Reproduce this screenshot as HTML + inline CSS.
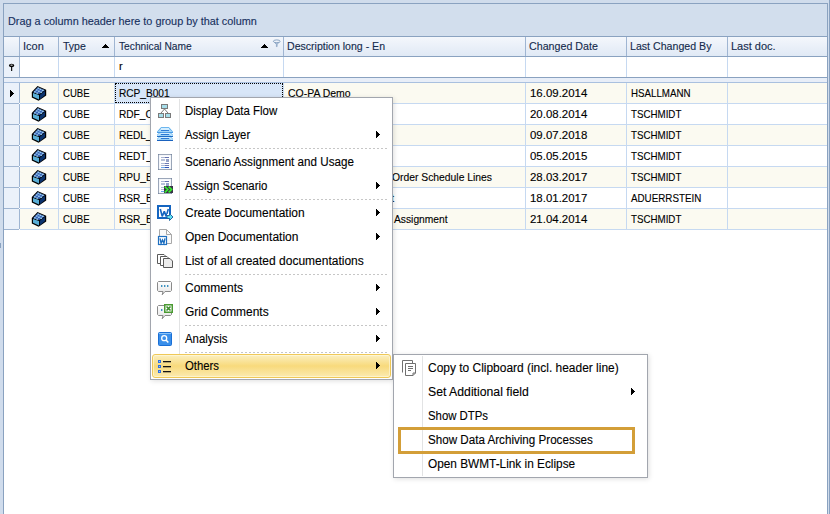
<!DOCTYPE html>
<html><head><meta charset="utf-8">
<style>
*{margin:0;padding:0;box-sizing:border-box}
html,body{width:830px;height:514px;overflow:hidden;background:#d0dcec;font-family:"Liberation Sans",sans-serif}
body{position:relative}
.a{position:absolute}
.t{position:absolute;font-size:11px;line-height:21px;height:21px;white-space:nowrap;color:#000;-webkit-text-stroke:0.12px currentColor}
.mi{position:absolute;font-size:12px;line-height:24px;height:24px;white-space:nowrap;color:#000;-webkit-text-stroke:0.12px currentColor}
.sep{position:absolute;height:1px;background-image:linear-gradient(to right,#c6c6c6 50%,transparent 50%);background-size:4px 1px}
.arr{position:absolute;width:0;height:0;border-top:4px solid transparent;border-bottom:3px solid transparent;border-left:4px solid #000}
svg{position:absolute;overflow:visible}
</style></head><body>

<div class="a" style="left:829px;top:0px;width:1px;height:514px;background:#8aa2c0;"></div>
<div class="a" style="left:0px;top:243px;width:1px;height:5px;background:#8aa2c0;"></div>
<div class="a" style="left:3px;top:3px;width:825px;height:511px;background:#8aa2c0;"></div>
<div class="a" style="left:4px;top:4px;width:823px;height:510px;background:#ffffff;"></div>
<div class="a" style="left:4px;top:4px;width:823px;height:32px;background:#d2deed;"></div>
<div class="t" style="left:8px;top:11px;color:#17305e;transform:scaleX(0.988);transform-origin:0 0;">Drag a column header here to group by that column</div>
<div class="a" style="left:4px;top:36px;width:823px;height:1px;background:#8aa2c0;"></div>
<div class="a" style="left:4px;top:37px;width:823px;height:19px;background:linear-gradient(#f4f7fc,#e0e9f5);"></div>
<div class="a" style="left:4px;top:56px;width:823px;height:1px;background:#8aa2c0;"></div>
<div class="a" style="left:19px;top:37px;width:1px;height:19px;background:#9fb5d2;"></div>
<div class="a" style="left:58px;top:37px;width:1px;height:19px;background:#9fb5d2;"></div>
<div class="a" style="left:114px;top:37px;width:1px;height:19px;background:#9fb5d2;"></div>
<div class="a" style="left:283px;top:37px;width:1px;height:19px;background:#9fb5d2;"></div>
<div class="a" style="left:525px;top:37px;width:1px;height:19px;background:#9fb5d2;"></div>
<div class="a" style="left:626px;top:37px;width:1px;height:19px;background:#9fb5d2;"></div>
<div class="a" style="left:727px;top:37px;width:1px;height:19px;background:#9fb5d2;"></div>
<div class="t" style="left:23px;top:36px;color:#142a4c;">Icon</div>
<div class="t" style="left:63px;top:36px;color:#142a4c;transform:scaleX(0.958);transform-origin:0 0;">Type</div>
<div class="t" style="left:118.5px;top:36px;color:#142a4c;transform:scaleX(0.929);transform-origin:0 0;">Technical Name</div>
<div class="t" style="left:287px;top:36px;color:#142a4c;transform:scaleX(0.96);transform-origin:0 0;">Description long - En</div>
<div class="t" style="left:529px;top:36px;color:#142a4c;transform:scaleX(0.971);transform-origin:0 0;">Changed Date</div>
<div class="t" style="left:629.5px;top:36px;color:#142a4c;transform:scaleX(0.965);transform-origin:0 0;">Last Changed By</div>
<div class="t" style="left:731px;top:36px;color:#142a4c;">Last doc.</div>
<svg style="left:102px;top:44px" width="7" height="4" shape-rendering="crispEdges"><path d="M3,0h1v1h-1z M2,1h3v1h-3z M1,2h5v1h-5z M0,3h7v1h-7z" fill="#000"/></svg>
<svg style="left:261px;top:44px" width="7" height="4" shape-rendering="crispEdges"><path d="M3,0h1v1h-1z M2,1h3v1h-3z M1,2h5v1h-5z M0,3h7v1h-7z" fill="#000"/></svg>
<svg style="left:272px;top:39px" width="10" height="10"><path d="M1.5,2.5 L4.4,5.3 V7.6 H5.1 V5.3 L8,2.5 Z" fill="#a9bdd7" stroke="#8ca6c4" stroke-width="0.8"/><ellipse cx="4.75" cy="2.3" rx="3.4" ry="1.4" fill="#eef3fa" stroke="#8ca6c4" stroke-width="1"/></svg>
<div class="a" style="left:4px;top:57px;width:15px;height:20px;background:#ebf1fa;"></div>
<div class="a" style="left:19px;top:57px;width:1px;height:20px;background:#9fb5d2;"></div>
<div class="a" style="left:58px;top:57px;width:1px;height:20px;background:#c6d9f1;"></div>
<div class="a" style="left:114px;top:57px;width:1px;height:20px;background:#c6d9f1;"></div>
<div class="a" style="left:283px;top:57px;width:1px;height:20px;background:#c6d9f1;"></div>
<div class="a" style="left:525px;top:57px;width:1px;height:20px;background:#c6d9f1;"></div>
<div class="a" style="left:626px;top:57px;width:1px;height:20px;background:#c6d9f1;"></div>
<div class="a" style="left:727px;top:57px;width:1px;height:20px;background:#c6d9f1;"></div>
<div class="a" style="left:4px;top:77px;width:823px;height:1px;background:#8aa2c0;"></div>
<div class="t" style="left:119px;top:56px;color:#000;">r</div>
<svg style="left:8px;top:63px" width="8" height="9"><ellipse cx="3.6" cy="2.5" rx="2.7" ry="1.8" fill="#000"/><ellipse cx="3.6" cy="2.1" rx="1.4" ry="0.6" fill="#d8d8d8"/><rect x="3.1" y="4" width="1.1" height="4" fill="#000"/></svg>
<div class="a" style="left:4px;top:78px;width:823px;height:4px;background:#e8eef8;"></div>
<div class="a" style="left:4px;top:82px;width:823px;height:1px;background:#a9c0df;"></div>
<div class="a" style="left:4px;top:83px;width:15px;height:20px;background:#ebf1fa;"></div>
<div class="a" style="left:19px;top:83px;width:1px;height:20px;background:#9fb5d2;"></div>
<div class="a" style="left:20px;top:83px;width:807px;height:20px;background:#fbfaf1;"></div>
<div class="a" style="left:58px;top:83px;width:1px;height:20px;background:#c6d9f1;"></div>
<div class="a" style="left:114px;top:83px;width:1px;height:20px;background:#c6d9f1;"></div>
<div class="a" style="left:283px;top:83px;width:1px;height:20px;background:#c6d9f1;"></div>
<div class="a" style="left:525px;top:83px;width:1px;height:20px;background:#c6d9f1;"></div>
<div class="a" style="left:626px;top:83px;width:1px;height:20px;background:#c6d9f1;"></div>
<div class="a" style="left:727px;top:83px;width:1px;height:20px;background:#c6d9f1;"></div>
<div class="a" style="left:4px;top:103px;width:15px;height:1px;background:#9fb5d2;"></div>
<div class="a" style="left:20px;top:103px;width:807px;height:1px;background:#c6d9f1;"></div>
<svg style="left:31px;top:85px" width="16" height="17"><g transform="translate(0,0.7)"><polygon points="6.5,0.3 15.2,4 15.2,9.8 7.6,15 0.8,11.8 0.8,6.2" fill="#000"/>
<polygon points="6.7,1.5 13.9,4.5 8.4,8.4 2,6.5" fill="#3761b5"/>
<polygon points="2,7.2 8,9.2 8,13.7 2,11" fill="#58aed6"/>
<polygon points="8.9,9.1 14,5.3 14,9.3 8.9,13.6" fill="#0b336e"/>
<rect x="6.50" y="1.90" width="1.8" height="1.2" fill="#a8dcf7"/><rect x="8.60" y="3.00" width="1.8" height="1.2" fill="#a8dcf7"/><rect x="10.90" y="4.00" width="1.8" height="1.2" fill="#a8dcf7"/><rect x="4.80" y="3.70" width="1.8" height="1.2" fill="#a8dcf7"/><rect x="7.00" y="4.90" width="1.8" height="1.2" fill="#a8dcf7"/><rect x="9.30" y="5.90" width="1.8" height="1.2" fill="#a8dcf7"/><rect x="3.00" y="5.60" width="1.8" height="1.2" fill="#a8dcf7"/><rect x="5.30" y="6.80" width="1.8" height="1.2" fill="#a8dcf7"/></g></svg>
<div class="t" style="left:63px;top:83px;color:#000;transform:scaleX(0.872);transform-origin:0 0;">CUBE</div>
<div class="a" style="left:115px;top:83px;width:168px;height:20px;background:#d8e6f8;"></div>
<div class="a" style="left:115px;top:83px;width:168px;height:20px;border:1px dotted #000"></div>
<div class="t" style="left:119px;top:83px;color:#000;transform:scaleX(0.92);transform-origin:0 0;">RCP_B001</div>
<div class="t" style="left:288px;top:83px;color:#000;transform:scaleX(0.951);transform-origin:0 0;">CO-PA Demo</div>
<div class="t" style="left:530px;top:83px;color:#000;transform:scaleX(1.04);transform-origin:0 0;">16.09.2014</div>
<div class="t" style="left:631px;top:83px;color:#000;transform:scaleX(0.885);transform-origin:0 0;">HSALLMANN</div>
<div class="a" style="left:4px;top:104px;width:15px;height:20px;background:#ebf1fa;"></div>
<div class="a" style="left:19px;top:104px;width:1px;height:20px;background:#9fb5d2;"></div>
<div class="a" style="left:20px;top:104px;width:807px;height:20px;background:#ffffff;"></div>
<div class="a" style="left:58px;top:104px;width:1px;height:20px;background:#c6d9f1;"></div>
<div class="a" style="left:114px;top:104px;width:1px;height:20px;background:#c6d9f1;"></div>
<div class="a" style="left:283px;top:104px;width:1px;height:20px;background:#c6d9f1;"></div>
<div class="a" style="left:525px;top:104px;width:1px;height:20px;background:#c6d9f1;"></div>
<div class="a" style="left:626px;top:104px;width:1px;height:20px;background:#c6d9f1;"></div>
<div class="a" style="left:727px;top:104px;width:1px;height:20px;background:#c6d9f1;"></div>
<div class="a" style="left:4px;top:124px;width:15px;height:1px;background:#9fb5d2;"></div>
<div class="a" style="left:20px;top:124px;width:807px;height:1px;background:#c6d9f1;"></div>
<svg style="left:31px;top:106px" width="16" height="17"><g transform="translate(0,0.7)"><polygon points="6.5,0.3 15.2,4 15.2,9.8 7.6,15 0.8,11.8 0.8,6.2" fill="#000"/>
<polygon points="6.7,1.5 13.9,4.5 8.4,8.4 2,6.5" fill="#3761b5"/>
<polygon points="2,7.2 8,9.2 8,13.7 2,11" fill="#58aed6"/>
<polygon points="8.9,9.1 14,5.3 14,9.3 8.9,13.6" fill="#0b336e"/>
<rect x="6.50" y="1.90" width="1.8" height="1.2" fill="#a8dcf7"/><rect x="8.60" y="3.00" width="1.8" height="1.2" fill="#a8dcf7"/><rect x="10.90" y="4.00" width="1.8" height="1.2" fill="#a8dcf7"/><rect x="4.80" y="3.70" width="1.8" height="1.2" fill="#a8dcf7"/><rect x="7.00" y="4.90" width="1.8" height="1.2" fill="#a8dcf7"/><rect x="9.30" y="5.90" width="1.8" height="1.2" fill="#a8dcf7"/><rect x="3.00" y="5.60" width="1.8" height="1.2" fill="#a8dcf7"/><rect x="5.30" y="6.80" width="1.8" height="1.2" fill="#a8dcf7"/></g></svg>
<div class="t" style="left:63px;top:104px;color:#000;transform:scaleX(0.872);transform-origin:0 0;">CUBE</div>
<div class="t" style="left:119px;top:104px;color:#000;transform:scaleX(0.92);transform-origin:0 0;">RDF_C</div>
<div class="t" style="left:530px;top:104px;color:#000;transform:scaleX(1.04);transform-origin:0 0;">20.08.2014</div>
<div class="t" style="left:631px;top:104px;color:#000;transform:scaleX(0.886);transform-origin:0 0;">TSCHMIDT</div>
<div class="a" style="left:4px;top:125px;width:15px;height:20px;background:#ebf1fa;"></div>
<div class="a" style="left:19px;top:125px;width:1px;height:20px;background:#9fb5d2;"></div>
<div class="a" style="left:20px;top:125px;width:807px;height:20px;background:#fbfaf1;"></div>
<div class="a" style="left:58px;top:125px;width:1px;height:20px;background:#c6d9f1;"></div>
<div class="a" style="left:114px;top:125px;width:1px;height:20px;background:#c6d9f1;"></div>
<div class="a" style="left:283px;top:125px;width:1px;height:20px;background:#c6d9f1;"></div>
<div class="a" style="left:525px;top:125px;width:1px;height:20px;background:#c6d9f1;"></div>
<div class="a" style="left:626px;top:125px;width:1px;height:20px;background:#c6d9f1;"></div>
<div class="a" style="left:727px;top:125px;width:1px;height:20px;background:#c6d9f1;"></div>
<div class="a" style="left:4px;top:145px;width:15px;height:1px;background:#9fb5d2;"></div>
<div class="a" style="left:20px;top:145px;width:807px;height:1px;background:#c6d9f1;"></div>
<svg style="left:31px;top:127px" width="16" height="17"><g transform="translate(0,0.7)"><polygon points="6.5,0.3 15.2,4 15.2,9.8 7.6,15 0.8,11.8 0.8,6.2" fill="#000"/>
<polygon points="6.7,1.5 13.9,4.5 8.4,8.4 2,6.5" fill="#3761b5"/>
<polygon points="2,7.2 8,9.2 8,13.7 2,11" fill="#58aed6"/>
<polygon points="8.9,9.1 14,5.3 14,9.3 8.9,13.6" fill="#0b336e"/>
<rect x="6.50" y="1.90" width="1.8" height="1.2" fill="#a8dcf7"/><rect x="8.60" y="3.00" width="1.8" height="1.2" fill="#a8dcf7"/><rect x="10.90" y="4.00" width="1.8" height="1.2" fill="#a8dcf7"/><rect x="4.80" y="3.70" width="1.8" height="1.2" fill="#a8dcf7"/><rect x="7.00" y="4.90" width="1.8" height="1.2" fill="#a8dcf7"/><rect x="9.30" y="5.90" width="1.8" height="1.2" fill="#a8dcf7"/><rect x="3.00" y="5.60" width="1.8" height="1.2" fill="#a8dcf7"/><rect x="5.30" y="6.80" width="1.8" height="1.2" fill="#a8dcf7"/></g></svg>
<div class="t" style="left:63px;top:125px;color:#000;transform:scaleX(0.872);transform-origin:0 0;">CUBE</div>
<div class="t" style="left:119px;top:125px;color:#000;transform:scaleX(0.92);transform-origin:0 0;">REDL_</div>
<div class="t" style="left:530px;top:125px;color:#000;transform:scaleX(1.04);transform-origin:0 0;">09.07.2018</div>
<div class="t" style="left:631px;top:125px;color:#000;transform:scaleX(0.886);transform-origin:0 0;">TSCHMIDT</div>
<div class="a" style="left:4px;top:146px;width:15px;height:20px;background:#ebf1fa;"></div>
<div class="a" style="left:19px;top:146px;width:1px;height:20px;background:#9fb5d2;"></div>
<div class="a" style="left:20px;top:146px;width:807px;height:20px;background:#ffffff;"></div>
<div class="a" style="left:58px;top:146px;width:1px;height:20px;background:#c6d9f1;"></div>
<div class="a" style="left:114px;top:146px;width:1px;height:20px;background:#c6d9f1;"></div>
<div class="a" style="left:283px;top:146px;width:1px;height:20px;background:#c6d9f1;"></div>
<div class="a" style="left:525px;top:146px;width:1px;height:20px;background:#c6d9f1;"></div>
<div class="a" style="left:626px;top:146px;width:1px;height:20px;background:#c6d9f1;"></div>
<div class="a" style="left:727px;top:146px;width:1px;height:20px;background:#c6d9f1;"></div>
<div class="a" style="left:4px;top:166px;width:15px;height:1px;background:#9fb5d2;"></div>
<div class="a" style="left:20px;top:166px;width:807px;height:1px;background:#c6d9f1;"></div>
<svg style="left:31px;top:148px" width="16" height="17"><g transform="translate(0,0.7)"><polygon points="6.5,0.3 15.2,4 15.2,9.8 7.6,15 0.8,11.8 0.8,6.2" fill="#000"/>
<polygon points="6.7,1.5 13.9,4.5 8.4,8.4 2,6.5" fill="#3761b5"/>
<polygon points="2,7.2 8,9.2 8,13.7 2,11" fill="#58aed6"/>
<polygon points="8.9,9.1 14,5.3 14,9.3 8.9,13.6" fill="#0b336e"/>
<rect x="6.50" y="1.90" width="1.8" height="1.2" fill="#a8dcf7"/><rect x="8.60" y="3.00" width="1.8" height="1.2" fill="#a8dcf7"/><rect x="10.90" y="4.00" width="1.8" height="1.2" fill="#a8dcf7"/><rect x="4.80" y="3.70" width="1.8" height="1.2" fill="#a8dcf7"/><rect x="7.00" y="4.90" width="1.8" height="1.2" fill="#a8dcf7"/><rect x="9.30" y="5.90" width="1.8" height="1.2" fill="#a8dcf7"/><rect x="3.00" y="5.60" width="1.8" height="1.2" fill="#a8dcf7"/><rect x="5.30" y="6.80" width="1.8" height="1.2" fill="#a8dcf7"/></g></svg>
<div class="t" style="left:63px;top:146px;color:#000;transform:scaleX(0.872);transform-origin:0 0;">CUBE</div>
<div class="t" style="left:119px;top:146px;color:#000;transform:scaleX(0.92);transform-origin:0 0;">REDT_</div>
<div class="t" style="left:530px;top:146px;color:#000;transform:scaleX(1.04);transform-origin:0 0;">05.05.2015</div>
<div class="t" style="left:631px;top:146px;color:#000;transform:scaleX(0.886);transform-origin:0 0;">TSCHMIDT</div>
<div class="a" style="left:4px;top:167px;width:15px;height:20px;background:#ebf1fa;"></div>
<div class="a" style="left:19px;top:167px;width:1px;height:20px;background:#9fb5d2;"></div>
<div class="a" style="left:20px;top:167px;width:807px;height:20px;background:#fbfaf1;"></div>
<div class="a" style="left:58px;top:167px;width:1px;height:20px;background:#c6d9f1;"></div>
<div class="a" style="left:114px;top:167px;width:1px;height:20px;background:#c6d9f1;"></div>
<div class="a" style="left:283px;top:167px;width:1px;height:20px;background:#c6d9f1;"></div>
<div class="a" style="left:525px;top:167px;width:1px;height:20px;background:#c6d9f1;"></div>
<div class="a" style="left:626px;top:167px;width:1px;height:20px;background:#c6d9f1;"></div>
<div class="a" style="left:727px;top:167px;width:1px;height:20px;background:#c6d9f1;"></div>
<div class="a" style="left:4px;top:187px;width:15px;height:1px;background:#9fb5d2;"></div>
<div class="a" style="left:20px;top:187px;width:807px;height:1px;background:#c6d9f1;"></div>
<svg style="left:31px;top:169px" width="16" height="17"><g transform="translate(0,0.7)"><polygon points="6.5,0.3 15.2,4 15.2,9.8 7.6,15 0.8,11.8 0.8,6.2" fill="#000"/>
<polygon points="6.7,1.5 13.9,4.5 8.4,8.4 2,6.5" fill="#3761b5"/>
<polygon points="2,7.2 8,9.2 8,13.7 2,11" fill="#58aed6"/>
<polygon points="8.9,9.1 14,5.3 14,9.3 8.9,13.6" fill="#0b336e"/>
<rect x="6.50" y="1.90" width="1.8" height="1.2" fill="#a8dcf7"/><rect x="8.60" y="3.00" width="1.8" height="1.2" fill="#a8dcf7"/><rect x="10.90" y="4.00" width="1.8" height="1.2" fill="#a8dcf7"/><rect x="4.80" y="3.70" width="1.8" height="1.2" fill="#a8dcf7"/><rect x="7.00" y="4.90" width="1.8" height="1.2" fill="#a8dcf7"/><rect x="9.30" y="5.90" width="1.8" height="1.2" fill="#a8dcf7"/><rect x="3.00" y="5.60" width="1.8" height="1.2" fill="#a8dcf7"/><rect x="5.30" y="6.80" width="1.8" height="1.2" fill="#a8dcf7"/></g></svg>
<div class="t" style="left:63px;top:167px;color:#000;transform:scaleX(0.872);transform-origin:0 0;">CUBE</div>
<div class="t" style="left:119px;top:167px;color:#000;transform:scaleX(0.92);transform-origin:0 0;">RPU_B</div>
<div class="t" style="left:392px;top:167px;color:#000;transform:scaleX(0.94);transform-origin:0 0;">Order Schedule Lines</div>
<div class="t" style="left:530px;top:167px;color:#000;transform:scaleX(1.04);transform-origin:0 0;">28.03.2017</div>
<div class="t" style="left:631px;top:167px;color:#000;transform:scaleX(0.886);transform-origin:0 0;">TSCHMIDT</div>
<div class="a" style="left:4px;top:188px;width:15px;height:20px;background:#ebf1fa;"></div>
<div class="a" style="left:19px;top:188px;width:1px;height:20px;background:#9fb5d2;"></div>
<div class="a" style="left:20px;top:188px;width:807px;height:20px;background:#ffffff;"></div>
<div class="a" style="left:58px;top:188px;width:1px;height:20px;background:#c6d9f1;"></div>
<div class="a" style="left:114px;top:188px;width:1px;height:20px;background:#c6d9f1;"></div>
<div class="a" style="left:283px;top:188px;width:1px;height:20px;background:#c6d9f1;"></div>
<div class="a" style="left:525px;top:188px;width:1px;height:20px;background:#c6d9f1;"></div>
<div class="a" style="left:626px;top:188px;width:1px;height:20px;background:#c6d9f1;"></div>
<div class="a" style="left:727px;top:188px;width:1px;height:20px;background:#c6d9f1;"></div>
<div class="a" style="left:4px;top:208px;width:15px;height:1px;background:#9fb5d2;"></div>
<div class="a" style="left:20px;top:208px;width:807px;height:1px;background:#c6d9f1;"></div>
<svg style="left:31px;top:190px" width="16" height="17"><g transform="translate(0,0.7)"><polygon points="6.5,0.3 15.2,4 15.2,9.8 7.6,15 0.8,11.8 0.8,6.2" fill="#000"/>
<polygon points="6.7,1.5 13.9,4.5 8.4,8.4 2,6.5" fill="#3761b5"/>
<polygon points="2,7.2 8,9.2 8,13.7 2,11" fill="#58aed6"/>
<polygon points="8.9,9.1 14,5.3 14,9.3 8.9,13.6" fill="#0b336e"/>
<rect x="6.50" y="1.90" width="1.8" height="1.2" fill="#a8dcf7"/><rect x="8.60" y="3.00" width="1.8" height="1.2" fill="#a8dcf7"/><rect x="10.90" y="4.00" width="1.8" height="1.2" fill="#a8dcf7"/><rect x="4.80" y="3.70" width="1.8" height="1.2" fill="#a8dcf7"/><rect x="7.00" y="4.90" width="1.8" height="1.2" fill="#a8dcf7"/><rect x="9.30" y="5.90" width="1.8" height="1.2" fill="#a8dcf7"/><rect x="3.00" y="5.60" width="1.8" height="1.2" fill="#a8dcf7"/><rect x="5.30" y="6.80" width="1.8" height="1.2" fill="#a8dcf7"/></g></svg>
<div class="t" style="left:63px;top:188px;color:#000;transform:scaleX(0.872);transform-origin:0 0;">CUBE</div>
<div class="t" style="left:119px;top:188px;color:#000;transform:scaleX(0.92);transform-origin:0 0;">RSR_B</div>
<div class="t" style="left:391px;top:188px;color:#000;">t</div>
<div class="t" style="left:530px;top:188px;color:#000;transform:scaleX(1.04);transform-origin:0 0;">18.01.2017</div>
<div class="t" style="left:631px;top:188px;color:#000;transform:scaleX(0.891);transform-origin:0 0;">ADUERRSTEIN</div>
<div class="a" style="left:4px;top:209px;width:15px;height:20px;background:#ebf1fa;"></div>
<div class="a" style="left:19px;top:209px;width:1px;height:20px;background:#9fb5d2;"></div>
<div class="a" style="left:20px;top:209px;width:807px;height:20px;background:#fbfaf1;"></div>
<div class="a" style="left:58px;top:209px;width:1px;height:20px;background:#c6d9f1;"></div>
<div class="a" style="left:114px;top:209px;width:1px;height:20px;background:#c6d9f1;"></div>
<div class="a" style="left:283px;top:209px;width:1px;height:20px;background:#c6d9f1;"></div>
<div class="a" style="left:525px;top:209px;width:1px;height:20px;background:#c6d9f1;"></div>
<div class="a" style="left:626px;top:209px;width:1px;height:20px;background:#c6d9f1;"></div>
<div class="a" style="left:727px;top:209px;width:1px;height:20px;background:#c6d9f1;"></div>
<div class="a" style="left:4px;top:229px;width:15px;height:1px;background:#9fb5d2;"></div>
<div class="a" style="left:20px;top:229px;width:807px;height:1px;background:#c6d9f1;"></div>
<svg style="left:31px;top:211px" width="16" height="17"><g transform="translate(0,0.7)"><polygon points="6.5,0.3 15.2,4 15.2,9.8 7.6,15 0.8,11.8 0.8,6.2" fill="#000"/>
<polygon points="6.7,1.5 13.9,4.5 8.4,8.4 2,6.5" fill="#3761b5"/>
<polygon points="2,7.2 8,9.2 8,13.7 2,11" fill="#58aed6"/>
<polygon points="8.9,9.1 14,5.3 14,9.3 8.9,13.6" fill="#0b336e"/>
<rect x="6.50" y="1.90" width="1.8" height="1.2" fill="#a8dcf7"/><rect x="8.60" y="3.00" width="1.8" height="1.2" fill="#a8dcf7"/><rect x="10.90" y="4.00" width="1.8" height="1.2" fill="#a8dcf7"/><rect x="4.80" y="3.70" width="1.8" height="1.2" fill="#a8dcf7"/><rect x="7.00" y="4.90" width="1.8" height="1.2" fill="#a8dcf7"/><rect x="9.30" y="5.90" width="1.8" height="1.2" fill="#a8dcf7"/><rect x="3.00" y="5.60" width="1.8" height="1.2" fill="#a8dcf7"/><rect x="5.30" y="6.80" width="1.8" height="1.2" fill="#a8dcf7"/></g></svg>
<div class="t" style="left:63px;top:209px;color:#000;transform:scaleX(0.872);transform-origin:0 0;">CUBE</div>
<div class="t" style="left:119px;top:209px;color:#000;transform:scaleX(0.92);transform-origin:0 0;">RSR_B</div>
<div class="t" style="left:394px;top:209px;color:#000;transform:scaleX(0.933);transform-origin:0 0;">Assignment</div>
<div class="t" style="left:530px;top:209px;color:#000;transform:scaleX(1.04);transform-origin:0 0;">21.04.2014</div>
<div class="t" style="left:631px;top:209px;color:#000;transform:scaleX(0.886);transform-origin:0 0;">TSCHMIDT</div>
<svg style="left:10px;top:90px" width="4" height="7" shape-rendering="crispEdges"><path d="M0,0h1v1h-1z M0,1h2v1h-2z M0,2h3v1h-3z M0,3h4v1h-4z M0,4h3v1h-3z M0,5h2v1h-2z M0,6h1v1h-1z" fill="#000"/></svg>
<div class="a" style="left:150px;top:97px;width:243px;height:283px;border:1px solid #a2a6ae;background:#fff;box-shadow:1px 1px 5px rgba(0,0,0,0.13)"></div>
<div class="a" style="left:179px;top:99px;width:1px;height:279px;background:#e2e3e4;"></div>
<svg style="left:156px;top:99px" width="18" height="24" viewBox="0 0 18 24"><rect x="5.5" y="5.5" width="6" height="4" fill="#a6dde9" stroke="#7a7a7a"/><rect x="2.5" y="14.5" width="5" height="4" fill="#a6dde9" stroke="#7a7a7a"/><rect x="9.5" y="14.5" width="5" height="4" fill="#a6dde9" stroke="#7a7a7a"/><path d="M8.5,10 L5,14 M8.5,10 L12,14" stroke="#7a7a7a" fill="none"/></svg>
<div class="mi" style="left:185px;top:99px;color:#000;transform:scaleX(0.953);transform-origin:0 0;">Display Data Flow</div>
<svg style="left:156px;top:123px" width="18" height="24" viewBox="0 0 18 24"><path d="M5,4 H13 L17,8.6 V10 H1 V8.6 Z" fill="#a6d6f8"/><path d="M5,4.5 H13 M5.2,4.6 L1.4,8.8 M12.8,4.6 L16.6,8.8" stroke="#6db6ee" stroke-width="1"/><rect x="5" y="5" width="8" height="2" fill="#d4eeff"/><rect x="5" y="7" width="8" height="1" fill="#2c7ad4"/><rect x="1" y="9" width="16" height="1" fill="#4a9ae6"/><rect x="1" y="10" width="16" height="4" fill="#9ad0f6"/><path d="M1.5,13 L4.5,10.5 H13.5 L16.5,13" stroke="#d4eeff" stroke-width="1" fill="none"/><rect x="5" y="11" width="8" height="1" fill="#2c7ad4"/><rect x="1" y="13" width="16" height="1" fill="#1f6cc5"/><rect x="1" y="10" width="1" height="1" fill="#fff"/><rect x="16" y="10" width="1" height="1" fill="#fff"/><rect x="1" y="14" width="16" height="4" fill="#9ad0f6"/><path d="M1.5,17 L4.5,14.5 H13.5 L16.5,17" stroke="#d4eeff" stroke-width="1" fill="none"/><rect x="5" y="15" width="8" height="1" fill="#2c7ad4"/><rect x="1" y="17" width="16" height="1" fill="#1a62be"/><rect x="1" y="14" width="1" height="1" fill="#fff"/><rect x="16" y="14" width="1" height="1" fill="#fff"/></svg>
<div class="mi" style="left:185px;top:123px;color:#000;transform:scaleX(0.939);transform-origin:0 0;">Assign Layer</div>
<svg style="left:376px;top:131px" width="4" height="7" shape-rendering="crispEdges"><path d="M0,0h1v1h-1z M0,1h2v1h-2z M0,2h3v1h-3z M0,3h4v1h-4z M0,4h3v1h-3z M0,5h2v1h-2z M0,6h1v1h-1z" fill="#000"/></svg>
<div class="sep" style="left:185px;top:148px;width:202px"></div>
<svg style="left:156px;top:150px" width="18" height="24" viewBox="0 0 18 24"><rect x="2.5" y="4.5" width="13" height="15" fill="#fff" stroke="#687890"/><rect x="3" y="5" width="12" height="14" fill="none" stroke="#e6ecf5" stroke-width="0.8"/><rect x="5" y="7" width="4" height="1" fill="#a9b5d3"/><rect x="9" y="7" width="4" height="1" fill="#6572b0"/><rect x="5" y="9" width="4" height="2" fill="#b8c2da"/><rect x="10" y="9" width="3" height="3" fill="#95a2c8"/><rect x="5" y="13" width="4" height="1" fill="#b0bbd6"/><rect x="9" y="13" width="4" height="1" fill="#6f7cb4"/><rect x="5" y="15" width="4" height="1" fill="#b0bbd6"/><rect x="9" y="15" width="4" height="1" fill="#6f7cb4"/><rect x="5" y="17" width="4" height="1" fill="#6aa8ec"/><rect x="9" y="17" width="4" height="1" fill="#2f52b8"/></svg>
<div class="mi" style="left:185px;top:150px;color:#000;transform:scaleX(0.97);transform-origin:0 0;">Scenario Assignment and Usage</div>
<svg style="left:156px;top:174px" width="18" height="24" viewBox="0 0 18 24"><rect x="2.5" y="4.5" width="13" height="15" fill="#fff" stroke="#687890"/><rect x="3" y="5" width="12" height="14" fill="none" stroke="#e6ecf5" stroke-width="0.8"/><rect x="5" y="7" width="4" height="1" fill="#a9b5d3"/><rect x="9" y="7" width="4" height="1" fill="#6572b0"/><rect x="5" y="9" width="4" height="2" fill="#b8c2da"/><rect x="10" y="9" width="3" height="3" fill="#95a2c8"/><rect x="5" y="13" width="4" height="1" fill="#b0bbd6"/><rect x="9" y="13" width="4" height="1" fill="#6f7cb4"/><rect x="5" y="15" width="4" height="1" fill="#b0bbd6"/><rect x="9" y="15" width="4" height="1" fill="#6f7cb4"/><rect x="5" y="17" width="4" height="1" fill="#6aa8ec"/><rect x="9" y="17" width="4" height="1" fill="#2f52b8"/><rect x="8" y="12" width="9" height="7" fill="#3b3548"/><path d="M8.8,12.6 L11.8,15.5 L8.8,18.4 M12.6,12.6 L15.6,15.5 L12.6,18.4" stroke="#33f02c" stroke-width="1.6" fill="none"/></svg>
<div class="mi" style="left:185px;top:174px;color:#000;transform:scaleX(0.95);transform-origin:0 0;">Assign Scenario</div>
<svg style="left:376px;top:182px" width="4" height="7" shape-rendering="crispEdges"><path d="M0,0h1v1h-1z M0,1h2v1h-2z M0,2h3v1h-3z M0,3h4v1h-4z M0,4h3v1h-3z M0,5h2v1h-2z M0,6h1v1h-1z" fill="#000"/></svg>
<div class="sep" style="left:185px;top:199px;width:202px"></div>
<svg style="left:156px;top:201px" width="18" height="24" viewBox="0 0 18 24"><rect x="2" y="5" width="12" height="12" fill="#fff" stroke="#1565c0" stroke-width="2"/><path d="M4.3,8 L6.2,15.4 L8.3,10.4 L10.2,15.4 L12.3,8" stroke="#1565c0" stroke-width="1.6" fill="none" stroke-linejoin="bevel"/><path d="M11,13 H17 V19 H14 V16 H11 Z" fill="#fff"/><path d="M11,14.5 H13.5 V12.5 L17,16 L13.5,19.5 V17.5 H11 Z" fill="#5fe0f0" stroke="#1a5a9a" stroke-width="0.9"/></svg>
<div class="mi" style="left:185px;top:201px;color:#000;transform:scaleX(0.996);transform-origin:0 0;">Create Documentation</div>
<svg style="left:376px;top:209px" width="4" height="7" shape-rendering="crispEdges"><path d="M0,0h1v1h-1z M0,1h2v1h-2z M0,2h3v1h-3z M0,3h4v1h-4z M0,4h3v1h-3z M0,5h2v1h-2z M0,6h1v1h-1z" fill="#000"/></svg>
<svg style="left:156px;top:225px" width="18" height="24" viewBox="0 0 18 24"><path d="M3.5,4.5 H10.5 L15.5,9.5 V18.5 H3.5 Z" fill="#fafafa" stroke="#a8a8a8"/><path d="M10.5,4.5 V9.5 H15.5" fill="none" stroke="#a8a8a8"/><rect x="2.5" y="11.5" width="8" height="8" fill="#fff" stroke="#1e6fc0" stroke-width="1.2"/><path d="M4,13.3 L5.1,18.2 L6.5,15 L7.9,18.2 L9,13.3" stroke="#1e6fc0" stroke-width="1.4" fill="none"/></svg>
<div class="mi" style="left:185px;top:225px;color:#000;">Open Documentation</div>
<svg style="left:376px;top:233px" width="4" height="7" shape-rendering="crispEdges"><path d="M0,0h1v1h-1z M0,1h2v1h-2z M0,2h3v1h-3z M0,3h4v1h-4z M0,4h3v1h-3z M0,5h2v1h-2z M0,6h1v1h-1z" fill="#000"/></svg>
<svg style="left:156px;top:249px" width="18" height="24" viewBox="0 0 18 24"><path d="M1.5,5.5 H8 L10.5,8 V14.5 H1.5 Z" fill="#fff" stroke="#5a5a5a" stroke-linejoin="round"/><path d="M4.5,7.5 H11 L13.5,10 V16.5 H4.5 Z" fill="#fff" stroke="#5a5a5a" stroke-linejoin="round"/><path d="M7.5,9.5 H14 L16.5,12 V18.5 H7.5 Z" fill="#ececec" stroke="#5a5a5a" stroke-linejoin="round"/></svg>
<div class="mi" style="left:185px;top:249px;color:#000;">List of all created documentations</div>
<div class="sep" style="left:185px;top:274px;width:202px"></div>
<svg style="left:156px;top:276px" width="18" height="24" viewBox="0 0 18 24"><defs><linearGradient id="bg1" x1="0" y1="0" x2="0" y2="1"><stop offset="0" stop-color="#fff"/><stop offset="1" stop-color="#e4e4e4"/></linearGradient></defs><path d="M2.5,5.5 H14.5 L15.5,6.5 V14.5 L14.5,15.5 H9 L6.2,18.8 L7,15.5 H2.5 L1.5,14.5 V6.5 Z" fill="url(#bg1)" stroke="#8a8a8a"/><rect x="5" y="9" width="1.4" height="2" fill="#3d92c0"/><rect x="8" y="9" width="1.4" height="2" fill="#3d92c0"/><rect x="11" y="9" width="1.4" height="2" fill="#3d92c0"/></svg>
<div class="mi" style="left:185px;top:276px;color:#000;">Comments</div>
<svg style="left:376px;top:284px" width="4" height="7" shape-rendering="crispEdges"><path d="M0,0h1v1h-1z M0,1h2v1h-2z M0,2h3v1h-3z M0,3h4v1h-4z M0,4h3v1h-3z M0,5h2v1h-2z M0,6h1v1h-1z" fill="#000"/></svg>
<svg style="left:156px;top:300px" width="18" height="24" viewBox="0 0 18 24"><defs><linearGradient id="bg1" x1="0" y1="0" x2="0" y2="1"><stop offset="0" stop-color="#fff"/><stop offset="1" stop-color="#e4e4e4"/></linearGradient></defs><path d="M2.5,5.5 H14.5 L15.5,6.5 V14.5 L14.5,15.5 H9 L6.2,18.8 L7,15.5 H2.5 L1.5,14.5 V6.5 Z" fill="url(#bg1)" stroke="#8a8a8a"/><rect x="5" y="9" width="1.4" height="2" fill="#3d92c0"/><rect x="8.75" y="4.75" width="7.5" height="7.5" fill="#fff" stroke="#4a9a32" stroke-width="1.5"/><path d="M10.5,6.5 L14.5,10.5 M14.5,6.5 L10.5,10.5" stroke="#3a8a2a" stroke-width="1.6"/></svg>
<div class="mi" style="left:185px;top:300px;color:#000;transform:scaleX(0.995);transform-origin:0 0;">Grid Comments</div>
<svg style="left:376px;top:308px" width="4" height="7" shape-rendering="crispEdges"><path d="M0,0h1v1h-1z M0,1h2v1h-2z M0,2h3v1h-3z M0,3h4v1h-4z M0,4h3v1h-3z M0,5h2v1h-2z M0,6h1v1h-1z" fill="#000"/></svg>
<div class="sep" style="left:185px;top:325px;width:202px"></div>
<svg style="left:156px;top:327px" width="18" height="24" viewBox="0 0 18 24"><rect x="2.5" y="5.5" width="13" height="13" rx="1" fill="#3a8fea" stroke="#1a6fd6"/><rect x="3" y="6" width="12" height="1" fill="#8cc4f8"/><circle cx="8.2" cy="11.2" r="2.5" fill="none" stroke="#fff" stroke-width="1.3"/><path d="M10,13 L12.3,15.5" stroke="#fff" stroke-width="1.5"/></svg>
<div class="mi" style="left:185px;top:327px;color:#000;transform:scaleX(0.948);transform-origin:0 0;">Analysis</div>
<svg style="left:376px;top:335px" width="4" height="7" shape-rendering="crispEdges"><path d="M0,0h1v1h-1z M0,1h2v1h-2z M0,2h3v1h-3z M0,3h4v1h-4z M0,4h3v1h-3z M0,5h2v1h-2z M0,6h1v1h-1z" fill="#000"/></svg>
<div class="sep" style="left:185px;top:352px;width:202px"></div>
<div class="a" style="left:152px;top:354px;width:239px;height:24px;border:1px solid #efc857;border-radius:3px;box-shadow:inset 0 0 0 1px rgba(255,250,225,0.6);background:linear-gradient(#fbefc0,#f8da7c 50%,#fbeab0)"></div>
<svg style="left:156px;top:354px" width="18" height="24" viewBox="0 0 18 24"><rect x="2" y="6" width="3" height="3" fill="#2c6fe0"/><rect x="3" y="7" width="1" height="1" fill="#9cc2f2"/><rect x="7" y="7" width="8" height="1.3" fill="#141414"/><rect x="2" y="11" width="3" height="3" fill="#2c6fe0"/><rect x="3" y="12" width="1" height="1" fill="#9cc2f2"/><rect x="7" y="12" width="8" height="1.3" fill="#141414"/><rect x="2" y="16" width="3" height="3" fill="#2c6fe0"/><rect x="3" y="17" width="1" height="1" fill="#9cc2f2"/><rect x="7" y="17" width="8" height="1.3" fill="#141414"/></svg>
<div class="mi" style="left:185px;top:354px;color:#000;transform:scaleX(0.944);transform-origin:0 0;">Others</div>
<svg style="left:376px;top:362px" width="4" height="7" shape-rendering="crispEdges"><path d="M0,0h1v1h-1z M0,1h2v1h-2z M0,2h3v1h-3z M0,3h4v1h-4z M0,4h3v1h-3z M0,5h2v1h-2z M0,6h1v1h-1z" fill="#000"/></svg>
<div class="a" style="left:393px;top:354px;width:255px;height:124px;border:1px solid #a2a6ae;background:#fff;box-shadow:1px 1px 5px rgba(0,0,0,0.13)"></div>
<div class="a" style="left:422px;top:356px;width:1px;height:120px;background:#e2e3e4;"></div>
<svg style="left:399px;top:356px" width="18" height="24" viewBox="0 0 18 24"><path d="M3.5,16.5 V4.5 H13.5 V7.5" fill="none" stroke="#707070"/><path d="M6.5,7.5 H16.5 V17 L14,19.5 H6.5 Z" fill="#fff" stroke="#707070"/><path d="M14,19.5 V17 H16.5" fill="none" stroke="#707070"/><path d="M9,10.5 H14 M9,12.5 H14 M9,14.5 H12" stroke="#707070"/></svg>
<div class="mi" style="left:428px;top:356px;color:#000;transform:scaleX(0.996);transform-origin:0 0;">Copy to Clipboard (incl. header line)</div>
<div class="mi" style="left:428px;top:380px;color:#000;transform:scaleX(1.02);transform-origin:0 0;">Set Additional field</div>
<svg style="left:631px;top:388px" width="4" height="7" shape-rendering="crispEdges"><path d="M0,0h1v1h-1z M0,1h2v1h-2z M0,2h3v1h-3z M0,3h4v1h-4z M0,4h3v1h-3z M0,5h2v1h-2z M0,6h1v1h-1z" fill="#000"/></svg>
<div class="mi" style="left:428px;top:404px;color:#000;transform:scaleX(0.948);transform-origin:0 0;">Show DTPs</div>
<div class="mi" style="left:428px;top:428px;color:#000;transform:scaleX(0.969);transform-origin:0 0;">Show Data Archiving Processes</div>
<div class="mi" style="left:428px;top:452px;color:#000;transform:scaleX(0.985);transform-origin:0 0;">Open BWMT-Link in Eclipse</div>
<div class="a" style="left:398px;top:427px;width:237px;height:27px;border:3px solid #d39e38"></div>
</body></html>
